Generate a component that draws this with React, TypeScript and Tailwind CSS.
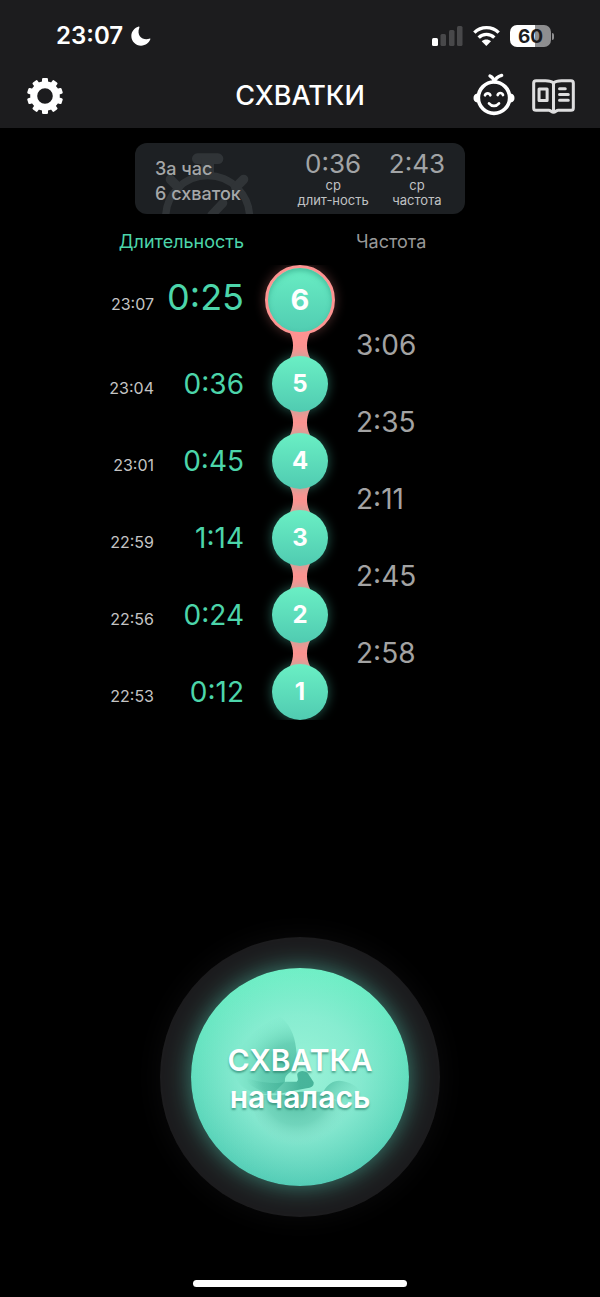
import clsx from 'clsx';

interface Contraction {
  number: number;
  startedAt: string;
  duration: string;
  interval?: string;
}

const contractions: Contraction[] = [
  { number: 6, startedAt: '23:07', duration: '0:25', interval: '3:06' },
  { number: 5, startedAt: '23:04', duration: '0:36', interval: '2:35' },
  { number: 4, startedAt: '23:01', duration: '0:45', interval: '2:11' },
  { number: 3, startedAt: '22:59', duration: '1:14', interval: '2:45' },
  { number: 2, startedAt: '22:56', duration: '0:24', interval: '2:58' },
  { number: 1, startedAt: '22:53', duration: '0:12' },
];

const gearTeeth = [0, 36, 72, 108, 144, 180, 216, 252, 288, 324];

function MoonIcon() {
  return (
    <svg width="20" height="20" viewBox="0 0 60 60" fill="#fff" aria-hidden="true">
      <path d="M22 2C10 6 1 16 1 30c0 16 13 29 29 29 14 0 24-8 28-19 1-2-1-3-3-2C37 44 15 31 25 5c1-2-1-4-3-3Z" />
    </svg>
  );
}

function SignalIcon() {
  return (
    <svg width="31" height="20" viewBox="0 0 31 20" fill="#48484a" aria-hidden="true">
      <rect x="0" y="12" width="6" height="8" rx="1.5" fill="#fff" />
      <rect x="8.5" y="8" width="5.5" height="12" rx="1.5" />
      <rect x="17" y="4" width="5.5" height="16" rx="1.5" />
      <rect x="25" y="0" width="5.5" height="20" rx="1.5" />
    </svg>
  );
}

function WifiIcon() {
  return (
    <svg width="27" height="20" viewBox="0 0 81 60" fill="none" stroke="#fff" strokeWidth="10" aria-hidden="true">
      <path d="M4 20C24 0 57 0 77 20" />
      <path d="M17 35c13-13 34-13 47 0" />
      <path d="M40 60 26 46c8-7 20-7 28 0Z" fill="#fff" stroke="none" />
    </svg>
  );
}

function Battery() {
  return (
    <div className="flex items-center gap-px">
      <div className="flex h-[22px] w-[41px] items-center justify-center rounded-[7px] bg-linear-to-r from-white from-60% to-[#8e8e90] to-60% text-[19px] font-bold leading-none text-[#1c1c1e]">
        60
      </div>
      <div className="h-[7px] w-[2px] rounded-r-full bg-[#8e8e90]" />
    </div>
  );
}

function GearIcon() {
  return (
    <svg width="36" height="36" viewBox="-18 -18 36 36" fill="#fff" aria-hidden="true">
      <circle r="11.3" fill="none" stroke="#fff" strokeWidth="7" />
      {gearTeeth.map((angle) => (
        <rect key={angle} x="-3" y="-18" width="6" height="7" rx="1.3" transform={`rotate(${angle})`} />
      ))}
    </svg>
  );
}

function BabyIcon() {
  return (
    <svg width="42" height="46" viewBox="0 0 126 138" fill="none" stroke="#fff" strokeWidth="11" strokeLinecap="round" aria-hidden="true">
      <circle cx="63" cy="74" r="47" />
      <path d="M13 64c-12 2-12 20 0 22ZM113 64c12 2 12 20 0 22Z" fill="#fff" strokeWidth="5" strokeLinejoin="round" />
      <path d="M64 26C62 18 58 12 51 9M64 26c3-9 11-16 22-19" strokeWidth="10" />
      <path d="M36 67c3-8 13-8 16 0M74 66c3-8 13-8 16 0M48 91c8 10 22 10 30 0" strokeWidth="8" />
    </svg>
  );
}

function BookIcon() {
  return (
    <svg width="43" height="35" viewBox="0 0 128 104" fill="none" stroke="#dededf" strokeWidth="9" strokeLinejoin="round" strokeLinecap="round" aria-hidden="true">
      <path d="M64 12C58 6 50 5 40 5H12q-7 0-7 7v74q0 7 7 7h38c6 0 8 6 14 6s8-6 14-6h38q7 0 7-7V12q0-7-7-7H88C78 5 70 6 64 12Z" />
      <path d="M64 12v84M82 29h17M82 46h26M82 63h26" />
      <path d="M21 30h24v34H21Z" />
    </svg>
  );
}

function StopwatchIcon() {
  return (
    <svg className="absolute left-0 top-0" width="130" height="72" viewBox="15 24 390 216" fill="none" stroke="#303437" strokeLinecap="round" aria-hidden="true">
      <circle cx="233" cy="248" r="126" strokeWidth="22" />
      <path d="M202 71h62" strokeWidth="32" />
      <path d="M233 71v50" strokeWidth="38" strokeLinecap="butt" />
      <path d="M121 133l24 24M341 133l-24 24" strokeWidth="28" />
      <path d="M245 240l34-36" strokeWidth="26" />
    </svg>
  );
}

function Connector() {
  return (
    <svg className="col-start-2 justify-self-center overflow-visible" width="20" height="21" viewBox="0 0 20 21" fill="#fd9391" aria-hidden="true">
      <path d="M0 -5V-2C4 6 4 15 0 23V26H20V23C16 15 16 6 20 -2V-5Z" />
    </svg>
  );
}

function FetusArt() {
  return (
    <svg className="absolute inset-0 h-full w-full" viewBox="123 129 654 654" aria-hidden="true">
      <defs>
        <radialGradient id="head" gradientUnits="userSpaceOnUse" cx="430" cy="450" r="190">
          <stop offset="0" stopColor="#46b79c" stopOpacity="0.9" />
          <stop offset="0.5" stopColor="#56c3a8" stopOpacity="0.7" />
          <stop offset="1" stopColor="#7ceacb" stopOpacity="0" />
        </radialGradient>
        <radialGradient id="body" gradientUnits="userSpaceOnUse" cx="440" cy="500" r="165">
          <stop offset="0" stopColor="#43b196" stopOpacity="0.9" />
          <stop offset="0.6" stopColor="#61c7ae" stopOpacity="0.6" />
          <stop offset="1" stopColor="#8ee5d0" stopOpacity="0" />
        </radialGradient>
        <linearGradient id="knee" x1="0" y1="0" x2="1" y2="0.6">
          <stop offset="0" stopColor="#50bea3" />
          <stop offset="1" stopColor="#85e5cb" stopOpacity="0" />
        </linearGradient>
        <linearGradient id="arm" gradientUnits="userSpaceOnUse" x1="290" y1="0" x2="450" y2="0">
          <stop offset="0" stopColor="#3fae94" stopOpacity="0" />
          <stop offset="1" stopColor="#3fae94" stopOpacity="0.9" />
        </linearGradient>
      </defs>
      <path d="M390 275C340 290 260 350 250 430C255 490 310 515 370 505L405 470C402 450 420 440 445 430L438 370C435 330 415 290 390 275Z" fill="url(#head)" />
      <path d="M300 500C360 520 410 508 450 500L520 500C540 530 580 530 600 550C600 620 530 665 450 665C370 660 310 610 300 500Z" fill="url(#body)" />
      <path d="M520 500C540 465 565 460 600 475C635 490 645 520 635 545C600 545 560 530 520 500Z" fill="url(#knee)" />
      <path d="M270 450C330 480 390 475 408 470H440C448 464 440 455 442 446C448 434 468 436 475 447L491 472C492 483 484 488 470 490L415 500C370 515 310 500 270 450Z" fill="url(#arm)" />
    </svg>
  );
}

function Average({ value, label }: { value: string; label: string }) {
  return (
    <div className="flex flex-col items-center">
      <dd className="text-[26px] leading-[28px] text-[#a2a4a6]">{value}</dd>
      <dt className="order-last text-center text-[13px] leading-[15px] text-[#c0c2c3]">
        ср
        <br />
        {label}
      </dt>
    </div>
  );
}

function ContractionRow({ item, current }: { item: Contraction; current: boolean }) {
  return (
    <li className="grid grid-cols-[1fr_70px_1fr] items-center gap-x-[21px]">
      <div className={clsx('flex items-baseline justify-end', current && 'pb-1.5')}>
        <time className="text-base text-[#c4c4c4]">{item.startedAt}</time>
        <span className={clsx('w-[90px] text-right text-[#4cd5aa]', current ? 'text-[36px] leading-[44px]' : 'text-[28px] leading-[36px]')}>
          {item.duration}
        </span>
      </div>
      <div
        className={clsx(
          'relative z-10 flex items-center justify-center justify-self-center rounded-full bg-linear-to-b from-[#6aefc4] to-[#50cbb1] font-bold text-white',
          current
            ? 'size-[70px] border-3 border-[#fd9391] bg-origin-border text-[29px] shadow-[0_0_12px_#fd939155,inset_0_3px_5px_#2c9b8088]'
            : 'size-14 text-2xl shadow-[0_0_12px_#50cbb177]'
        )}
      >
        {item.number}
      </div>
      {item.interval && (
        <>
          <Connector />
          <span className="col-start-3 text-[28px] leading-[21px] text-[#a3a3a3]">{item.interval}</span>
        </>
      )}
    </li>
  );
}

export default function App() {
  return (
    <div className="flex min-h-screen flex-col bg-black font-['Inter',sans-serif] text-white">
      <header className="bg-[#1c1c1e] pb-2">
        <div className="flex h-[72px] items-center justify-between pl-14 pr-[46px]">
          <div className="flex items-center gap-2 text-2xl font-semibold">
            23:07
            <MoonIcon />
          </div>
          <div className="flex items-center gap-2.5">
            <SignalIcon />
            <WifiIcon />
            <Battery />
          </div>
        </div>
        <nav className="grid h-12 grid-cols-[1fr_auto_1fr] items-center px-[25px]">
          <button type="button" aria-label="Настройки" className="justify-self-start p-0.5">
            <GearIcon />
          </button>
          <h1 className="text-[27px] font-medium">СХВАТКИ</h1>
          <div className="flex items-center gap-[17px] justify-self-end">
            <button type="button" aria-label="Малыш">
              <BabyIcon />
            </button>
            <button type="button" aria-label="Справка">
              <BookIcon />
            </button>
          </div>
        </nav>
      </header>

      <main className="flex flex-1 flex-col items-center pt-[15px]">
        <section className="relative flex h-[71px] w-[330px] items-center justify-between overflow-hidden rounded-xl bg-[#1d2023] px-5">
          <StopwatchIcon />
          <p className="relative pt-1 text-lg font-medium leading-[25px] text-[#a5a7a8]">
            За час
            <br />6 схваток
          </p>
          <dl className="relative flex gap-5">
            <Average value="0:36" label="длит-ность" />
            <Average value="2:43" label="частота" />
          </dl>
        </section>

        <section className="w-full">
          <div className="grid h-[51px] grid-cols-2 items-center gap-x-28 pt-1 text-lg">
            <h2 className="text-right text-[#4cd5aa]">Длительность</h2>
            <h2 className="text-[#989898]">Частота</h2>
          </div>
          <ol className="overflow-hidden">
            {contractions.map((item, index) => (
              <ContractionRow key={item.number} item={item} current={index === 0} />
            ))}
          </ol>
        </section>

        <div className="mb-[63px] mt-auto flex size-[280px] items-center justify-center rounded-full bg-[#1c1c1e] shadow-[0_0_30px_#1c1c1e66]">
          <button
            type="button"
            className="relative size-[218px] rounded-full bg-[radial-gradient(circle,#aaf8dfcc_0%,#9df1db99_40%,transparent_72%),linear-gradient(#6eefc5,#52cbb5)] pt-1 text-[30px] font-semibold leading-[37px] text-white shadow-[0_0_24px_#50cbb199] text-shadow-[0_2px_2px_#23786399]"
          >
            <FetusArt />
            <span className="relative">
              СХВАТКА
              <br />
              началась
            </span>
          </button>
        </div>
      </main>

      <footer className="flex justify-center pb-2.5">
        <div className="h-[7px] w-[214px] rounded-full bg-white" />
      </footer>
    </div>
  );
}
